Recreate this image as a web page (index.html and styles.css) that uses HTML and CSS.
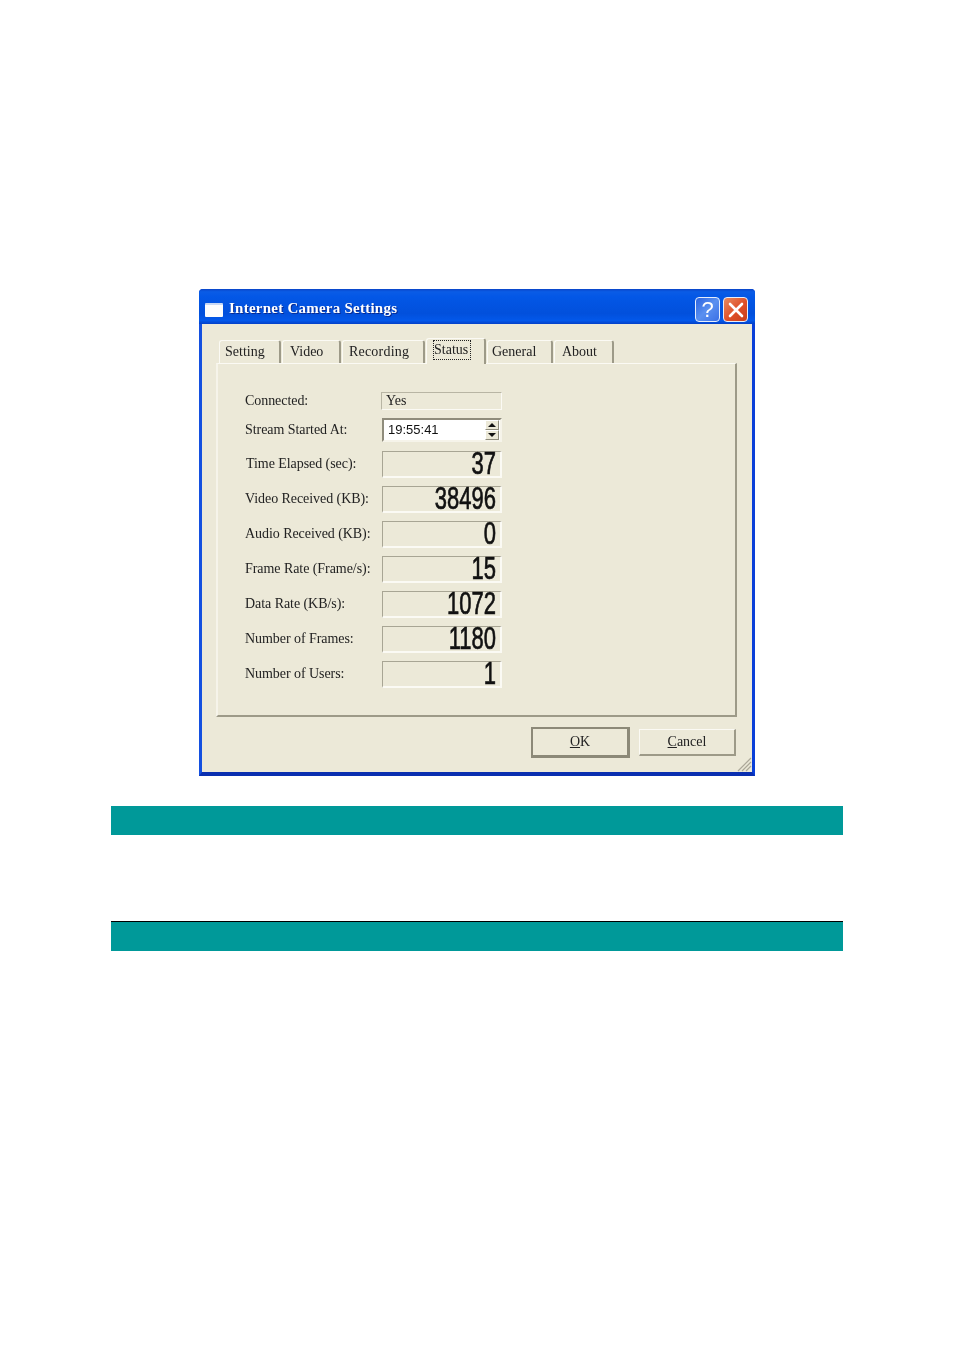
FILE: index.html
```html
<!DOCTYPE html>
<html lang="en">

<head>
    <meta charset="UTF-8">
    <meta name="viewport" content="width=device-width, initial-scale=1.0">
    <title>Internet Camera Settings</title>
    <link rel="stylesheet" href="styles.css">
</head>

<body>
    <div class="window">
        <div class="titlebar">
            <span class="app-icon"></span>
            <span class="title">Internet Camera Settings</span>
            <span class="cap-btn help">?</span>
            <span class="cap-btn close">
                <svg width="16" height="16" viewBox="0 0 16 16">
                    <path d="M2 2 L14 14 M14 2 L2 14" stroke="#fff" stroke-width="2.6" stroke-linecap="round" />
                </svg>
            </span>
        </div>

        <div class="client">
            <ul class="tabs">
                <li class="tab t-setting">Setting</li>
                <li class="tab t-video">Video</li>
                <li class="tab t-recording">Recording</li>
                <li class="tab t-status active"><span class="focus">Status</span></li>
                <li class="tab t-general">General</li>
                <li class="tab t-about">About</li>
            </ul>

            <div class="panel">
                <div class="row row-plain">
                    <span class="label">Connected:</span>
                    <span class="static">Yes</span>
                </div>
                <div class="row row-edit">
                    <span class="label">Stream Started At:</span>
                    <span class="edit">
                        <span class="edit-text">19:55:41</span>
                        <span class="spin">
                            <span class="spin-btn"><i class="arrow-up"></i></span>
                            <span class="spin-btn"><i class="arrow-down"></i></span>
                        </span>
                    </span>
                </div>
                <div class="row row-lcd">
                    <span class="label indent">Time Elapsed (sec):</span>
                    <span class="lcd"><b>37</b></span>
                </div>
                <div class="row row-lcd">
                    <span class="label">Video Received (KB):</span>
                    <span class="lcd"><b>38496</b></span>
                </div>
                <div class="row row-lcd">
                    <span class="label">Audio Received (KB):</span>
                    <span class="lcd"><b>0</b></span>
                </div>
                <div class="row row-lcd">
                    <span class="label">Frame Rate (Frame/s):</span>
                    <span class="lcd"><b>15</b></span>
                </div>
                <div class="row row-lcd">
                    <span class="label">Data Rate (KB/s):</span>
                    <span class="lcd"><b>1072</b></span>
                </div>
                <div class="row row-lcd">
                    <span class="label">Number of Frames:</span>
                    <span class="lcd"><b>1180</b></span>
                </div>
                <div class="row row-lcd">
                    <span class="label">Number of Users:</span>
                    <span class="lcd"><b>1</b></span>
                </div>
            </div>

            <div class="buttons">
                <span class="btn btn-default"><u>O</u>K</span>
                <span class="btn btn-cancel"><u>C</u>ancel</span>
            </div>

            <svg class="grip" width="16" height="16" viewBox="0 0 16 16">
                <path d="M15 2 L2 15 M15 6 L6 15 M15 10 L10 15" stroke="#aca899" stroke-width="1.2" />
            </svg>
        </div>
    </div>

    <div class="band band-first"></div>
    <div class="band band-second"></div>
</body>

</html>
```

FILE: styles.css
```css
* {
    margin: 0;
    padding: 0;
    box-sizing: border-box;
    list-style: none;
}

body {
    background-color: #fff;
    padding-top: 289px;
    font-family: "Liberation Serif", "Noto Sans CJK TC", serif;
    font-size: 14px;
    color: #222;
}

/* window frame, the source picture is a slightly soft scan */
.window {
    position: relative;
    width: 556px;
    height: 487px;
    margin-left: 199px;
    background: #0b3fd6;
    border-left: 3px solid #1450e0;
    border-right: 3px solid #0a3fd8;
    border-bottom: 4px solid #0a2fb0;
    border-radius: 4px 4px 0 0;
    display: flex;
    flex-direction: column;
    filter: blur(0.4px);
}

.titlebar {
    height: 35px;
    margin: 0 -3px;
    padding: 4px 7px 0 6px;
    display: flex;
    align-items: center;
    border-radius: 4px 4px 0 0;
    background: linear-gradient(#0a45c8 0, #0a5ce6 8%, #0357e6 22%, #0250dc 70%, #0358ea 90%, #0340c8 100%);
}

.app-icon {
    width: 18px;
    height: 14px;
    margin-top: 2px;
    background: #fdfdfd;
    border-top: 2px solid #c8d8f4;
    border-radius: 1px;
}

.title {
    margin-left: 6px;
    color: #fff;
    font-weight: bold;
    font-size: 15px;
    letter-spacing: 0.24px;
    text-shadow: 1px 1px 0 #0a2a90;
    flex: 1;
}

.cap-btn {
    width: 25px;
    height: 25px;
    margin-top: 2px;
    border: 1px solid #e6eefc;
    border-radius: 4px;
    display: flex;
    align-items: center;
    justify-content: center;
    color: #fff;
}

.help {
    margin-right: 3px;
    background: linear-gradient(135deg, #2a63e0, #5a90f0 50%, #3a70e6);
    font-family: "Liberation Sans", sans-serif;
    font-size: 22px;
}

.close {
    background: linear-gradient(135deg, #e88a60, #de4f28 55%, #c8401c);
}

/* dialog body */
.client {
    position: relative;
    flex: 1;
    background-color: #ece9d8;
    padding: 14px 15px 0 14px;
}

.tabs {
    display: flex;
    align-items: flex-end;
    height: 25px;
    padding-left: 3px;
}

.tab {
    height: 23px;
    padding-left: 5px;
    line-height: 21px;
    border-top: 1px solid #fbfaf4;
    border-left: 1px solid #fbfaf4;
    border-right: 2px solid #9d9a88;
    border-radius: 3px 3px 0 0;
    margin-right: 1px;
}

.t-setting { width: 62px; }
.t-video { width: 59px; padding-left: 7px; }
.t-recording { width: 83px; padding-left: 6px; letter-spacing: 0.2px; }
.t-general { width: 66px; padding-left: 4px; }
.t-about { width: 60px; padding-left: 7px; }

.t-status {
    width: 60px;
    height: 26px;
    margin-bottom: -1px;
    background-color: #ece9d8;
    position: relative;
    padding-left: 6px;
    line-height: 20px;
}

.focus {
    display: inline-block;
    height: 20px;
    width: 38px;
    margin-top: 1px;
    line-height: 18px;
    border: 1px dotted #222;
}

.panel {
    height: 354px;
    padding: 28px 0 0 27px;
    border-top: 1px solid #fbfaf4;
    border-left: 2px solid #f6f4ea;
    border-right: 2px solid #9d9a88;
    border-bottom: 2px solid #9d9a88;
}

.row {
    display: flex;
    align-items: center;
}

.label {
    width: 137px;
    letter-spacing: -0.06px;
    white-space: nowrap;
}

.indent {
    padding-left: 1px;
}

.row-plain {
    height: 18px;
    margin-bottom: 8px;
}

.static {
    width: 121px;
    height: 18px;
    margin-left: -1px;
    padding-left: 4px;
    line-height: 15px;
    border: 1px solid #b8b5a4;
    border-right-color: #fbfaf4;
    border-bottom-color: #fbfaf4;
}

.row-edit {
    height: 23px;
    margin-bottom: 10px;
}

.edit {
    width: 120px;
    height: 24px;
    display: flex;
    align-items: center;
    justify-content: space-between;
    background-color: #fff;
    border: 2px solid #8f8c7c;
    border-right-color: #f6f4ea;
    border-bottom-color: #f6f4ea;
    padding: 0 1px 0 4px;
}

.edit-text {
    font-family: "Liberation Sans", sans-serif;
    font-size: 13px;
    color: #111;
}

.spin {
    display: flex;
    flex-direction: column;
    width: 14px;
}

.spin-btn {
    height: 10px;
    background-color: #ece9d8;
    border: 1px solid #fff;
    border-right-color: #8f8c7c;
    border-bottom-color: #8f8c7c;
    display: flex;
    align-items: center;
    justify-content: center;
}

.arrow-up {
    border: 4px solid transparent;
    border-top: 0;
    border-bottom: 4px solid #111;
}

.arrow-down {
    border: 4px solid transparent;
    border-bottom: 0;
    border-top: 4px solid #111;
}

.row-lcd {
    height: 27px;
    margin-bottom: 8px;
}

.row-lcd .label {
    padding-bottom: 2px;
}

.lcd {
    width: 120px;
    height: 27px;
    padding-right: 4px;
    display: flex;
    align-items: center;
    justify-content: flex-end;
    border: 1px solid #a8a594;
    border-right: 2px solid #fbfaf4;
    border-bottom: 2px solid #fbfaf4;
}

/* tall thin digits of the meter readouts */
.lcd b {
    display: block;
    font-family: "Liberation Sans", sans-serif;
    font-size: 22px;
    font-weight: normal;
    line-height: 16px;
    color: #111;
    -webkit-text-stroke: 0.5px #111;
    transform: scaleY(1.45);
}

.buttons {
    display: flex;
    align-items: center;
    height: 30px;
    margin-top: 10px;
    padding-left: 315px;
}

.btn {
    display: flex;
    align-items: center;
    justify-content: center;
    background-color: #ece9d8;
    border: 1px solid #fbfaf4;
    border-right: 2px solid #9d9a88;
    border-bottom: 2px solid #9d9a88;
}

.btn-default {
    width: 99px;
    height: 31px;
    border: 2px solid #8c8978;
    border-right-width: 3px;
    border-bottom-width: 3px;
}

.btn-cancel {
    width: 97px;
    height: 27px;
    margin-left: 9px;
}

.grip {
    position: absolute;
    right: 0;
    bottom: 0;
}

/* teal bars below the picture */
.band {
    width: 732px;
    margin-left: 111px;
    background-color: #009999;
}

.band-first {
    height: 29px;
    margin-top: 30px;
}

.band-second {
    height: 30px;
    margin-top: 86px;
    border-top: 1px solid #000;
}
```
